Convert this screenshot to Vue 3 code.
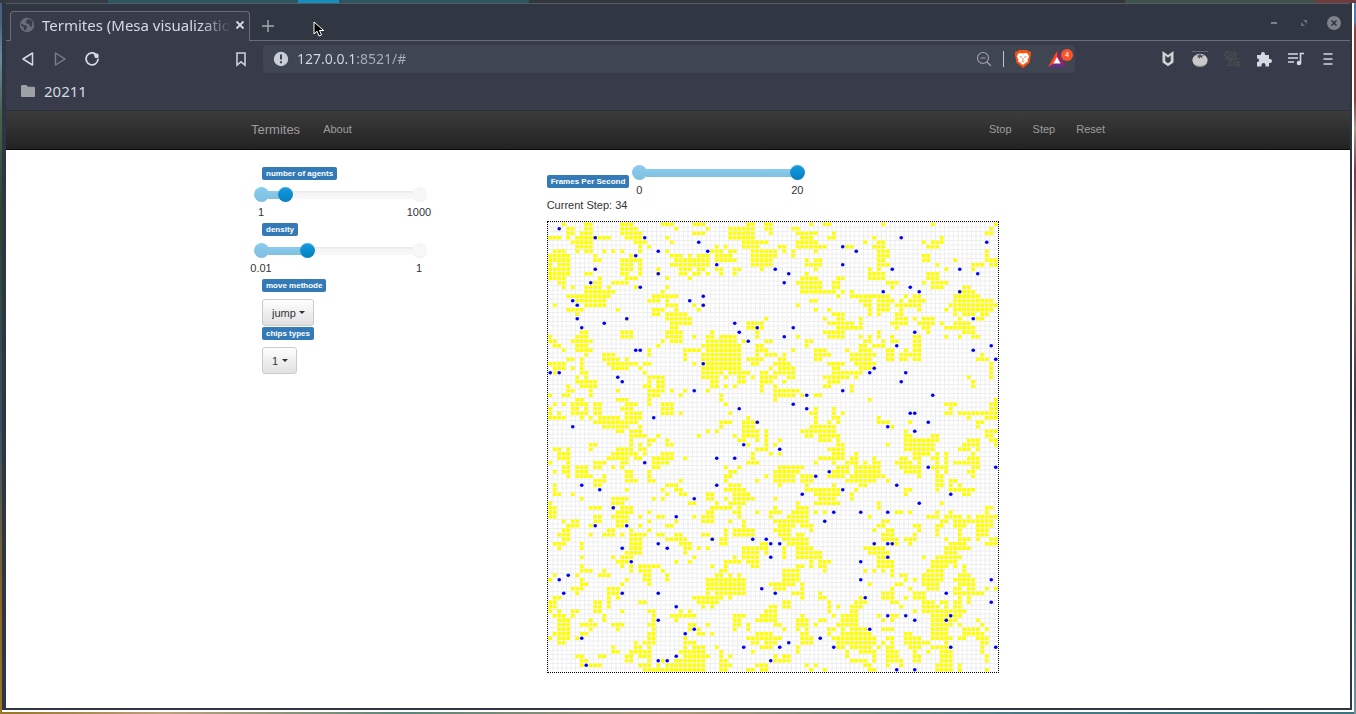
<script setup>
import { reactive } from 'vue'

const sliders = reactive([
  { id: 'agents', label: 'number of agents', min: 1, max: 1000, step: 1, value: 153 },
  { id: 'density', label: 'density', min: 0.01, max: 1, step: 0.01, value: 0.3 }
])
const choices = [
  { id: 'move', label: 'move methode', value: 'jump' },
  { id: 'chips', label: 'chips types', value: '1' }
]
const fps = reactive({ min: 0, max: 20, step: 1, value: 20 })
const ratio = s => ({ '--fill': (s.value - s.min) / (s.max - s.min) })

const CELL = 4.5
const lines = Array.from({ length: 100 }, (_, i) => {
  const p = i * CELL + 0.5
  return `M${p} 0V450M0 ${p}H450`
}).join('')

// wood chips: one entry per grid row, occupied columns as single cells or ranges
const chips = [
  '3 8-9 16-18 25-27 32-34 44-45 48-49 58 61-62 74 85 99',
  '4-5 8-9 16-19 28 35 40-45 48-49 54-55 98',
  '4-5 7-9 16-20 32-34 40-45 49 55-59 63 97-98',
  '0-2 4 6-10 11-13 17-20 26 40-45 56-58 62-63 72 87',
  '5-9 19-21 27 43-48 55-59 70 73-74 83 85-87',
  '6-9 20 22 37 39 43-46 51-52 55-61 66-67 72-74 84-86',
  '1-3 6 8-9 12 14 16 20 26 36-38 40-41 45-49 50 52 54 59 73-75 97',
  '0-4 10 18 27-29 31 33-35 37-40 45-49 50 54 73-75 83-84 97',
  '0-4 10-11 16-20 28-35 37-41 45-49 57 59-60 73-74 83-84 90 97-99',
  '0 2-4 16-18 20 27-35 45-49 57-60 73-75 86 94-96 98-99',
  '0-4 10 16-18 20 24 29-31 33-34 37-38 41-42 47 59 71 73 88 94',
  '0-4 8-9 16-17 20 24 29-30 32-33 35 38 41 57 71-74 84-86',
  '0-3 11 17-19 26 31 56-59 64-65 71-74 84-86',
  '2-3 10-11 14-17 55-60 63-64 75-77 83 85-88',
  '3 5 8-11 13 19 26 56-60 63-64 76 85-87 92-93',
  '8-14 25 56-63 65 67 91-94',
  '4-13 23-28 64 67-75 79 81-82 90-95',
  '6-12 22-24 26 58-59 69-71 73-76 78 80-83 90-98',
  '1 8-12 26-28 32 34 55 70-71 73-75 77-82 89-99',
  '4-7 15 23-25 28 33 59 62 71 73-75 78 82 88 90-98',
  '6 23-24 26-30 63-65 71 73 77-78 90 92-94 96-97',
  '17 26-31 48 61 64-65 69 77-79 81 83-85 91 95-96',
  '27-31 44-47 62-67 69 76-79 82-85 87 90-93',
  '27-28 44-47 64-69 77 83-84 88-94',
  '7-8 16-18 26-29 36 46 61-65 73 84 92-94',
  '0 6-8 16-18 26-29 32 35-36 38-41 46 55 62-65 69 71 73 76 81-82 88 91 94-95',
  '0-1 5-9 25 27-29 35-41 43 48-49 57-58 70-71 74 76-77 81-82',
  '1-2 6-8 24 34-42 46-47 57 69-70 72-74 81-82',
  '3 6-9 22 30-33 35-42 46-48 54 59-61 66 69-71 75-76 79 81-82',
  '8 12-14 22 30 34-42 46 48-49 50 52 59-62 67-72 75-76 78-82 96',
  '4-5 7 12-15 17 30 34-42 44-47 51-52 59-60 67-71 75-76 78-79 81-82 95-97',
  '0-3 7 13-19 21-22 32 34-42 45-46 50-53 62-65 68-72 98',
  '1-3 5 7 14-17 20 34-42 49 51-54 63-64 69-71 98',
  '1 7-8 21 34-38 40-44 47-48 50-54 63-69 98',
  '6 8 22-25 34-37 39 42-43 45 47-50 53-54 61-66 68 93 98',
  '6-10 22 24-25 36-37 42-43 47-49 52 62-64 94',
  '4 7-10 21-22 24-25 36-37 39 41 47 50 61-62 67 94',
  '4-5 9 15 22-25 27 30 35 47 50-55 67',
  '0 3-4 9 22-24 29 38 50-54 56 59-60',
  '6-7 15-17 22 38 50 71 99',
  '1 3 5-8 10-11 17-19 22 25-27 39 88-90 98-99',
  '0 5-6 8 10-11 16-18 25-27 59 63 89 98-99',
  '0 2 5-8 10-11 17-20 25-27 29 40 58-59 63 65 88-89 91-99',
  '0-3 7 9 11-15 17-20 44 59 63-64 73 93 97-99',
  '10-19 38-40 43-46 59 62 64 73-75 80 95-96',
  '12-17 20 38 43-45 58-63 76 95',
  '15-16 18-20 35 37 43-46 48 56-63 79 97-99',
  '18-21 24 33 41 43-46 48 57-58 60-64 79-80 85-86 97-98',
  '18 22-23 26 42-43 46 48 51 60-62 64 79-86 93-95 98-99',
  '9-10 18 20 22 26-27 44 48 50 64-65 75 79-85 92-95 99',
  '1-2 4 9 15-18 20-21 46-48 62-65 79-85 91-93 95',
  '2-4 14-19 21 25-27 45 49 51 63-65 68 81-84 86 88 94',
  '2-4 13-17 19-20 23-27 30 45 60-65 67-68 72 78-79 81-82 85-86 88 93-95',
  '0 4 10-12 16-17 23-26 44-46 59 63 66-68 70 72-73 77-80 82 86 88 90-95',
  '3-4 6-8 10-11 14 16 23-24 39 42 51-56 64-66 68-73 78-82 85-88 94-95',
  '1 3-4 6-8 17-18 22 40-41 50-55 63-66 68-73 79-82 86 88 93-94',
  '4 6-9 12 17-18 22 39-40 48 50-54 56-58 62-65 67-74 82 86-87 94',
  '10-12 17-19 22-23 29 39 46 50-54 56-58 66-72 75 86-87 89-90',
  '1 10-11 26-28 40-42 51 57 63 69-70 86-87 89 91',
  '1 17 25 28-29 39-43 57-64 68 79-80 86 89-94',
  '1-2 5 26 29-30 35-36 41-44 59-64 67 79 92-93',
  '7 14-17 23 25 35-36 39 41-45 50 60-63 67',
  '0 14-16 31-32 37 40-43 55 59-64 73 87',
  '0-1 9-11 14 16-18 36-40 42 50 55-57 73 97-98',
  '0-1 15-18 22 35-36 41-42 46 49-51 54-57 59 61 77-78 80 86 89 97',
  '0-1 10-11 14-17 20 24-25 32 34-36 42 49 53-57 71 84-86 88-91 93 95-99',
  '3 5-6 10-11 15-17 22 28 34-36 40 43 50-57 74-75 87-88 90-98',
  '4-6 9 15-16 20 26-27 43 51-54 56-58 73-74 81-82 86-87 90-92 95-98',
  '3-4 13-14 18 22 39 41-45 50-53 58 72 75-76 82 86 91 95-97',
  '2-4 9 12-14 16 18-21 24-25 28-29 34-35 39 41-45 51-53 55-56 74-76 81 86 91 95-97',
  '3-4 18-20 26-30 36 38-39 52-57 74-77 79-81 88 91-93 95 98-99',
  '1-3 7 18-20 29-31 38-39 47-48 53-57 76-77 80 89-92 97-99',
  '2 7 18-20 30-31 33 35 43-48 52 55-58 70-74 88-93',
  '17-20 30 43-46 48 52 55-60 71-75 88-90',
  '7 14 16-18 32 41 43-46 52 55-60 73-75 83 86-91',
  '15-17 28 31 39-42 44-46 58 60-62 73-76 85-90',
  '7 16 18 20-24 36 39 45-46 55-56 58 60-61 73-76 85-88 90 92',
  '7-9 12 18 20-22 25 38-39 52-55 61 70 72 74 76 84-87 92',
  '1 6 11-13 21-22 26 37-38 40 42 52-55 76 78-79 83-87 91-93',
  '0 7 17 21-22 26 35-43 52-55 79 81 83-87 90-94',
  '7-8 16 22 35-43 49-54 56 71 77-78 83-86 91-94',
  '5-7 13-15 35-43 50-52 56 76 80 84-86 90-91 93-94 97 99',
  '6 13-15 35 37-43 54-56 60 74-76 81-83 90-96',
  '1-2 13 15 32-38 40 56 60-61 69 74-76 79 81-83 91 93',
  '0-1 10-11 13 20-21 33-37 52-53 62 68-70 76-77 83-85 87-88 90-91 93',
  '0-1 10-11 13 34 36 49-50 52-53 62 64 67-69 78 83-86 88 90-91',
  '0 2 5-6 10-11 16 22-23 29 31 48-50 62 67-68 81 83-92',
  '1-3 5 12 23 27-32 41-43 47-50 56 63 65-68 73 76-77 85-91',
  '2-4 9 12 23 28 41-42 46-50 55-57 60-61 65-68 74 76 85-90 95',
  '2-4 7-10 14-16 22-23 31-32 35 41-42 44 50-51 55-57 59 64-68 85-89 91 96',
  '2-4 9 15 23 31 33 41 44 52 55 57 62-63 65 67-70 74-76 85-88 92-95 97',
  '1-4 7-8 22-23 33-34 36 46-49 56-57 62 65-71 79-80 85-88 92-96',
  '0 2-4 6 22-23 30 44-51 56-58 63-72 75-76 79-82 85-89 91-92 95-97',
  '2-3 19 21-23 30-32 45-46 48-50 56-58 64-72 74 76 79-84 88 96-97',
  '14 19-20 22 30 32-34 37 47-49 55 64-65 67-71 73 75-76 80-82 85-89 96',
  '14-15 18-22 29-34 38 45 55 66 69-72 75-77 81 84 87-89 96',
  '6-7 11-12 17-18 20-22 30-35 38 40 50 52-53 66 72 75-77 81-82 87-89 97',
  '7-8 17-18 22 25 28-34 38-39 50-53 67-70 72 75-78 81-82 87-89 97',
  '7 9-11 20-22 24 26-34 38-40 46-48 57 59 70-71 75 78 86-89 91',
  '21-34 38-39 44-45 47-48 58 61 71-72 86-89 91 97'
]
const chipPath = chips.map((row, y) => row.split(' ').map(part => {
  const [a, b = a] = part.split('-').map(Number)
  let d = ''
  for (let x = a; x <= b; x++) d += `M${(x * CELL + 0.4).toFixed(1)} ${(y * CELL + 0.4).toFixed(1)}h3.7v3.7h-3.7z`
  return d
}).join('')).join('')

// termites as column,row pairs
const termites = (
  '2,1 10,3 21,3 33,4 24,6 35,6 19,7 37,9 10,10 24,11 9,13 20,14 34,16 5,17 31,17 6,18 34,18 6,21 17,21 12,22 41,22 7,23 46,23 42,24 44,26 19,28 20,28 34,31 ' +
  '78,3 97,4 65,5 68,6 65,9 50,10 76,10 91,10 53,11 95,11 52,13 80,14 74,15 82,15 91,15 94,21 54,23 81,24 52,25 98,27 77,27 94,28 99,30 72,32 ' +
  '0,33 2,33 15,34 16,35 32,37 42,41 23,43 46,44 5,45 43,49 37,52 41,52 21,53 7,58 37,58 11,59 32,61 14,63 28,65 ' +
  '71,33 79,33 78,35 65,37 57,38 85,38 54,40 57,41 80,42 81,42 84,44 75,45 81,46 51,50 84,54 99,54 62,55 59,56 77,58 65,59 56,60 89,60 82,62 63,64 69,64 75,64 61,66 ' +
  '10,67 17,67 36,70 45,70 48,70 24,71 49,71 16,72 26,72 49,74 18,75 4,78 2,79 47,81 3,82 16,82 24,82 28,85 24,88 32,90 30,91 7,92 43,94 28,96 24,97 26,97 49,97 8,98 ' +
  '51,71 72,71 75,71 76,71 75,74 69,75 69,79 98,79 50,82 88,82 70,83 98,84 75,87 79,87 89,87 81,88 88,88 71,90 60,92 53,93 51,94 63,94 89,94 99,94 77,99 81,99'
).split(' ').map(p => p.split(',').map(n => (Number(n) + 0.5) * CELL))
</script>

<template>
  <div class="desktop">
    <div class="frame">
      <div class="window">
        <header class="titlebar">
          <div class="tab">
            <svg class="globe" width="16" height="16" viewBox="0 0 16 16">
              <circle cx="8" cy="8" r="7.2" fill="#696d76" />
              <path d="M2 6.5 5 8l2 .5L8.500 10 7 12v2L5 12.500 4.500 10 2 8.500zM8 2.500 10 2l3 2 .5 3-1 3-2-1-.5-2-2.500-.5L7 5z" fill="#383c4a" />
            </svg>
            <span class="tab-title">Termites (Mesa visualizatio</span>
            <button class="icon-btn close" aria-label="Close tab">
              <svg width="10" height="10" viewBox="0 0 10 10"><path d="m1.500 1.500 7 7m0-7-7 7" stroke="#d3dae3" stroke-width="1.800" /></svg>
            </button>
          </div>
          <button class="icon-btn plus" aria-label="New tab">
            <svg width="12" height="12" viewBox="0 0 12 12"><path d="M6 0v12M0 6h12" stroke="#a5a9b2" stroke-width="1.400" /></svg>
          </button>
          <svg class="pointer" width="12" height="17" viewBox="0 0 12 17">
            <path d="M1 1v12l3-2.800L6 15l2.500-1-2-4.500h4.200z" fill="#000" stroke="#fff" />
          </svg>
          <div class="window-btns">
            <button class="icon-btn" aria-label="Minimize"><svg width="16" height="16" viewBox="0 0 16 16"><path d="M5 8h6" stroke="#7c818c" stroke-width="2" /></svg></button>
            <button class="icon-btn" aria-label="Restore"><svg width="16" height="16" viewBox="0 0 16 16"><path d="M7 5h4v4zM5 7v4h4z" fill="#696e79" /></svg></button>
            <button class="icon-btn" aria-label="Close"><svg width="16" height="16" viewBox="0 0 16 16"><circle cx="8" cy="8" r="7" fill="#7c818c" /><path d="m5.500 5.500 5 5m0-5-5 5" stroke="#2f343f" stroke-width="1.600" /></svg></button>
          </div>
        </header>

        <div class="toolbar">
          <div class="nav-btns">
            <button class="icon-btn" aria-label="Back"><svg width="16" height="16" viewBox="0 0 16 16"><path d="M12.500 2v12L3 8z" fill="none" stroke="#d3dae3" stroke-width="1.500" stroke-linejoin="round" /></svg></button>
            <button class="icon-btn" aria-label="Forward"><svg width="16" height="16" viewBox="0 0 16 16"><path d="M3.500 2v12L13 8z" fill="none" stroke="#7c808c" stroke-width="1.400" stroke-linejoin="round" /></svg></button>
            <button class="icon-btn" aria-label="Reload"><svg width="16" height="16" viewBox="0 0 16 16"><path d="M12.300 3.600A6 6 0 1 0 14 8.500" fill="none" stroke="#d3dae3" stroke-width="1.800" stroke-linecap="round" /><path d="M9.500 2.500h3l2 .5v4h-3.500z" fill="#d3dae3" /></svg></button>
          </div>
          <button class="icon-btn" aria-label="Bookmark"><svg width="16" height="16" viewBox="0 0 16 16"><path d="M4 2h8v12l-4-3.200L4 14z" fill="none" stroke="#c9ced8" stroke-width="1.600" /></svg></button>
          <div class="address">
            <svg width="16" height="16" viewBox="0 0 16 16"><circle cx="8" cy="8" r="7.200" fill="#c9ced8" /><path d="M8 3.500v5" stroke="#404552" stroke-width="2" /><path d="M8 10.200v2" stroke="#404552" stroke-width="2" /></svg>
            <input class="url" type="text" value="127.0.0.1:8521/#" aria-label="Address">
            <button class="icon-btn" aria-label="Zoom"><svg width="16" height="16" viewBox="0 0 16 16"><circle cx="7" cy="7" r="5.500" fill="none" stroke="#9ba0ab" stroke-width="1.200" /><path d="M4.500 7h5M11 11l4 4" stroke="#9ba0ab" stroke-width="1.200" /></svg></button>
            <i class="divider"></i>
            <button class="icon-btn brave" aria-label="Shields">
              <svg width="16" height="18" viewBox="0 0 16 18"><path d="M4 0h8l1.500 1.500 2-.2.5 3-1.500 8.500L8 18l-6.500-5.200L0 4.300l.5-3 2 .2z" fill="#fb5210" /><path d="m3.500 3.500 2-.6 2.500.6 2.500-.6 2 .6 1.700 3-1.700 3 .3 2-2.300 1.500L8 15l-2.500-2-2.300-1.500.3-2-1.700-3z" fill="#fff" /><path d="m4 6.200 3 .5-.8 1.300zM12 6.200l-3 .5.8 1.300zM7.600 8h.8l.2 2.300-.6.500-.6-.5zM5.800 11l2.200.6 2.200-.6L8 12.600z" fill="#e8743c" /></svg>
            </button>
            <button class="icon-btn rewards" aria-label="Rewards">
              <svg width="18" height="16" viewBox="0 0 18 16"><path d="M9 0 0 16l9-5z" fill="#ff4724" /><path d="m9 0 9 16-9-5z" fill="#9e1f63" /><path d="M0 16h18l-9-5z" fill="#662d91" /><path d="m9 6-3.600 6.400h7.200z" fill="#fff" /></svg>
              <span class="count">4</span>
            </button>
          </div>
          <div class="extensions">
            <button class="icon-btn" aria-label="Security extension"><svg width="16" height="16" viewBox="0 0 16 16"><path d="M2.500 0 8 4l5.500-4v11.500L8 15.500l-5.500-4z" fill="#d0d1d3" /><path d="M5.300 4.500v5.700L8 12.200l2.700-2V4.500L8 6.800z" fill="#383c4a" /><path d="m2.500 12.300 5.500 3.200 5.500-3.200" stroke="#383c4a" stroke-dasharray="1 1" fill="none" /></svg></button>
            <button class="icon-btn" aria-label="Tomato timer"><svg width="16" height="16" viewBox="0 0 16 16"><path d="M0 .5h16" stroke="#646872" /><ellipse cx="8" cy="9.300" rx="7.600" ry="6.500" fill="#c9c9c9" /><path d="M2 13q6 4 12 0-6 5-12 0" fill="#777" /><path d="m4 4 3 .5L8 1l1 3.500 3-.5-2 2 .5 1.500L8.500 6 7 8l-.3-2-1.900 1L6 5z" fill="#4d5057" /></svg></button>
            <button class="icon-btn" aria-label="GitZip"><svg width="16" height="16" viewBox="0 0 16 16"><text x="0" y="7" class="gitzip">Git</text><path d="M0 8h15" stroke="#4c4c4c" /><text x="3" y="15" class="gitzip">Zip</text></svg></button>
            <button class="icon-btn" aria-label="Extensions"><svg width="16" height="16" viewBox="0 0 16 16"><path d="M1 4h4V3a2 2 0 0 1 4 0v1h4v4h1a2 2 0 0 1 0 4h-1v3.500H9.500V14a2 2 0 0 0-4 0v1.500H1V11h1a2 2 0 0 0 0-3.500H1z" fill="#d3dae3" /></svg></button>
            <button class="icon-btn" aria-label="Media"><svg width="16" height="16" viewBox="0 0 16 16"><path d="M0 3h10M0 7h10M0 11h6" stroke="#d3dae3" stroke-width="1.600" /><path d="M12.500 12V2.500H16" fill="none" stroke="#d3dae3" stroke-width="1.600" /><circle cx="11" cy="12" r="2.300" fill="#d3dae3" /></svg></button>
            <button class="icon-btn" aria-label="Menu"><svg width="16" height="16" viewBox="0 0 16 16"><path d="M3.500 3h9M3.500 8h9M3.500 13h9" stroke="#d3dae3" stroke-width="1.600" /></svg></button>
          </div>
        </div>

        <div class="bookmarks">
          <a href="#" class="bookmark">
            <svg width="14" height="12" viewBox="0 0 14 12"><path d="M1 0h4.500L7 1.700h6q1 0 1 1V11q0 1-1 1H1q-1 0-1-1V1q0-1 1-1z" fill="#9da0a5" /></svg>
            20211
          </a>
        </div>

        <nav class="navbar">
          <div class="container nav-inner">
            <a href="#" class="brand">Termites</a>
            <a href="#">About</a>
            <div class="actions">
              <a href="#">Stop</a>
              <a href="#">Step</a>
              <a href="#">Reset</a>
            </div>
          </div>
        </nav>

        <main class="page">
          <div class="container columns">
            <section class="sidebar">
              <div v-for="s in sliders" :key="s.id" class="control">
                <label class="label" :for="s.id">{{ s.label }}</label>
                <div class="slider" :style="ratio(s)">
                  <div class="rail">
                    <input :id="s.id" v-model.number="s.value" type="range" :min="s.min" :max="s.max" :step="s.step">
                  </div>
                  <div class="limits"><span>{{ s.min }}</span><span>{{ s.max }}</span></div>
                </div>
              </div>
              <div v-for="c in choices" :key="c.id" class="choice">
                <label class="label" :for="c.id">{{ c.label }}</label>
                <div class="dropdown">
                  <select :id="c.id"><option>{{ c.value }}</option></select>
                </div>
              </div>
            </section>

            <section class="model">
              <div class="fps">
                <label class="label" for="fps">Frames Per Second</label>
                <div class="slider" :style="ratio(fps)">
                  <div class="rail">
                    <input id="fps" v-model.number="fps.value" type="range" :min="fps.min" :max="fps.max" :step="fps.step">
                  </div>
                  <div class="limits"><span>0</span><span>20</span></div>
                </div>
              </div>
              <p class="step">Current Step: 34</p>
              <svg class="world" width="450" height="450" viewBox="0 0 450 450">
                <path :d="lines" stroke="#eee" fill="none" />
                <path :d="chipPath" fill="#ff0" />
                <circle v-for="(t, i) in termites" :key="i" :cx="t[0]" :cy="t[1]" r="1.800" fill="#00f" />
              </svg>
            </section>
          </div>
        </main>
      </div>
    </div>
  </div>
</template>

<style>
body {
  margin: 0;
}
</style>

<style scoped>
* {
  box-sizing: border-box;
}
.desktop {
  display: flex;
  min-height: 100vh;
  padding: 3px 2px 2px;
  background:
    linear-gradient(90deg, #353b43 0 8%, #2b5560 8% 22%, #128fbd 22% 25%, #2b5560 25% 39%, #34363d 39% 83%, #40534b 83% 97%, #713b3d 97%) top / 100% 3px no-repeat,
    linear-gradient(#527bb4 0 3%, #8c403b 4% 14%, #a89a86 18%, #7a3651 24%, #97715f 36%, #4d3b4a 55%, #3f7580 80%, #79909a) right / 2px 100% no-repeat,
    linear-gradient(#49617f 0 3%, #6c8b9b 8%, #49604f 16%, #28482f 30%, #365262 60%, #8b6627 85%, #97762a) left / 2px 100% no-repeat,
    linear-gradient(90deg, #967424, #b9a17d 12%, #5f8379 30%, #a69376 50%, #467a82 75%, #39757b);
  font-family: "Noto Sans", sans-serif;
}
.frame {
  display: flex;
  flex: 1;
  min-width: 0;
  border: solid #fff;
  border-width: 0 2px 2px 0;
  background: #2f3542;
}
.window {
  display: flex;
  flex: 1;
  flex-direction: column;
  min-width: 0;
  border: solid #2f3542;
  border-width: 0 2px 2px 4px;
  background: #fff;
}
.icon-btn {
  display: flex;
  flex: none;
  align-items: center;
  justify-content: center;
  padding: 0;
  border: 0;
  background: none;
}
svg {
  display: block;
  flex: none;
}
.titlebar {
  position: relative;
  display: flex;
  align-items: flex-end;
  height: 38px;
  padding: 0 8px 0 4px;
  border-top: 1px solid #555b65;
  background: linear-gradient(#6a6d76, #6a6d76) bottom / 100% 1px no-repeat #313742;
}
.tab {
  display: flex;
  align-items: center;
  width: 240px;
  height: 30px;
  padding: 0 6px 3px 8px;
  border: 1px solid #6a6d76;
  border-bottom: 0;
  border-radius: 4px 4px 0 0;
  background: #383c4a;
}
.tab-title {
  flex: 1;
  margin-left: 7px;
  color: #d3dae3;
  font-size: 15px;
  line-height: 20px;
  white-space: nowrap;
  -webkit-mask-image: linear-gradient(90deg, #000 84%, transparent);
  mask-image: linear-gradient(90deg, #000 84%, transparent);
}
.close {
  margin-left: 4px;
}
.plus {
  height: 30px;
  margin-left: 12px;
}
.pointer {
  position: absolute;
  top: 17px;
  left: 307px;
}
.window-btns {
  display: flex;
  gap: 14px;
  margin-left: auto;
  padding-bottom: 10px;
}
.toolbar {
  display: flex;
  align-items: center;
  height: 36px;
  padding: 0 14px;
  background: #383c4a;
}
.nav-btns {
  display: flex;
  gap: 16px;
  margin-right: 133px;
}
.address {
  display: flex;
  flex: 1;
  align-items: center;
  height: 28px;
  margin-left: 14px;
  padding: 0 0 0 10px;
  border-radius: 4px;
  background: #404552;
}
.url {
  flex: 1;
  min-width: 0;
  margin: 0 8px;
  padding: 0;
  border: 0;
  outline: 0;
  background: linear-gradient(90deg, #d3dae3 60px, #a9afba 60px);
  -webkit-background-clip: text;
  background-clip: text;
  color: transparent;
  font: 14px/20px "Noto Sans", sans-serif;
}
.divider {
  width: 1px;
  height: 16px;
  margin: 0 11px;
  background: #c0c4cc;
}
.rewards {
  position: relative;
  margin: 0 9px 0 17px;
}
.count {
  position: absolute;
  top: -2px;
  left: 13px;
  width: 12px;
  height: 12px;
  border-radius: 6px;
  background: #fb542b;
  color: #fff;
  font: 7px/12px "Noto Sans", sans-serif;
  text-align: center;
}
.extensions {
  display: flex;
  gap: 16px;
  margin-left: 85px;
}
.gitzip {
  fill: #4c4c4c;
  font: bold 8px "DejaVu Sans", sans-serif;
}
.bookmarks {
  height: 34px;
  padding: 3px 15px;
  border-bottom: 1px solid #2b2e39;
  background: #383c4a;
}
.bookmark {
  display: inline-flex;
  align-items: center;
  gap: 9px;
  color: #d3dae3;
  font-size: 15px;
  line-height: 22px;
  text-decoration: none;
}
.navbar {
  height: 39px;
  border-bottom: 1px solid #080808;
  background: linear-gradient(#3c3c3c, #222);
}
.container {
  width: 100%;
  max-width: 876px;
  margin: 0 auto;
  padding: 0 11px;
  font-family: "Liberation Sans", Arial, sans-serif;
}
.nav-inner {
  display: flex;
  align-items: center;
  gap: 23px;
  height: 36px;
}
.navbar a {
  color: #9d9d9d;
  font-size: 11px;
  text-decoration: none;
}
.navbar .brand {
  font-size: 13px;
}
.actions {
  display: flex;
  gap: 21px;
  margin-left: auto;
}
.page {
  flex: 1;
  padding: 15px 0 35px;
  color: #333;
}
.columns {
  display: grid;
  grid-template-columns: 1fr 2fr;
  font-size: 11px;
  line-height: 15px;
}
.sidebar {
  padding: 2px 11px 0;
}
.model {
  padding-left: 11px;
}
.control {
  height: 56px;
}
.label {
  display: block;
  flex: none;
  width: fit-content;
  padding: 0 4px;
  border-radius: 2px;
  background: #337ab7;
  color: #fff;
  font-size: 8px;
  font-weight: bold;
  line-height: 13px;
}
.slider {
  width: 198px;
  margin: 7px 0 0 -21px;
}
.rail {
  position: relative;
  height: 15px;
  margin: 0 12px 0 13px;
}
.rail::before,
.rail::after {
  position: absolute;
  top: 0;
  left: 0;
  z-index: 1;
  width: 15px;
  height: 15px;
  border-radius: 50%;
  background: linear-gradient(#89cdef, #81bfde);
  content: "";
}
.rail::after {
  right: 0;
  left: auto;
  z-index: 0;
  background: linear-gradient(#f5f5f5, #f9f9f9);
  box-shadow: inset 0 -1px 0 #ececec;
}
.rail input {
  position: absolute;
  inset: 0;
  z-index: 2;
  width: 100%;
  height: 15px;
  margin: 0;
  appearance: none;
  background: none;
}
.rail input::-webkit-slider-thumb {
  width: 15px;
  height: 15px;
  appearance: none;
  border-radius: 50%;
  background: linear-gradient(#149bdf, #0480be);
  box-shadow: inset 0 1px 0 rgba(255, 255, 255, .2);
}
.rail input::-webkit-slider-runnable-track {
  height: 15px;
  background:
    linear-gradient(#89cdef, #81bfde) 14px 4px / calc((100% - 15px) * var(--fill) - 7px) 8px no-repeat,
    linear-gradient(#e6e6e6, #f5f5f5 30%, #f9f9f9) 14px 4px / calc(100% - 28px) 8px no-repeat;
}
.limits {
  display: flex;
  justify-content: space-between;
  margin-top: 3px;
}
.limits span {
  width: 40px;
  text-align: center;
}
.choice {
  height: 48px;
}
.dropdown {
  position: relative;
  width: fit-content;
  margin-top: 7px;
}
.dropdown::after {
  position: absolute;
  top: 12px;
  right: 9px;
  border: 3px solid transparent;
  border-top-color: #333;
  border-bottom: 0;
  content: "";
}
select {
  display: block;
  height: 27px;
  padding: 0 17px 0 9px;
  appearance: none;
  border: 1px solid #ccc;
  border-radius: 3px;
  background: linear-gradient(#fff, #e0e0e0);
  color: #333;
  font: 11px "Liberation Sans", Arial, sans-serif;
}
.fps {
  display: flex;
  align-items: flex-start;
}
.fps .label {
  margin-top: 10px;
}
.fps .slider {
  margin: 0 0 0 -10px;
}
.step {
  margin: 0 0 8px;
}
.world {
  box-sizing: content-box;
  border: 1px dotted #000;
}
</style>
